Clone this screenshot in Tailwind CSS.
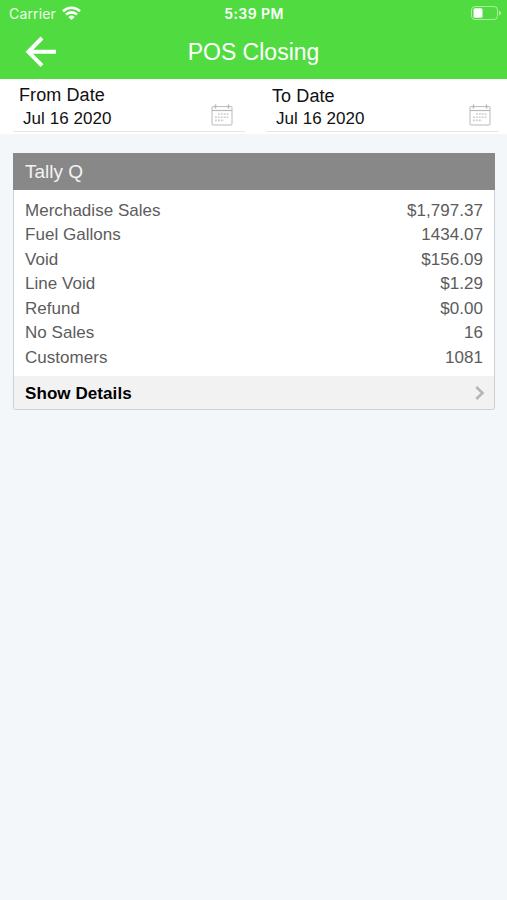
<!DOCTYPE html>
<html lang="en">
<head>
<meta charset="utf-8">
<title>POS Closing</title>
<script src="https://cdn.jsdelivr.net/npm/@tailwindcss/browser@4"></script>
</head>
<body class="w-[507px] h-[900px] overflow-hidden bg-[#f3f7fa] font-['Liberation_Sans',Arial,sans-serif] text-[17px]">
<header class="h-[79px] bg-[#50dc40] text-white flex flex-col">
  <div class="h-7 grid grid-cols-3 items-center pl-[9px] pr-[6px] font-[Inter,sans-serif] leading-none">
    <div class="flex items-center gap-[6px]">
      <span class="text-[14px] tracking-[0.15px] text-white/90">Carrier</span>
      <svg class="w-[19px] h-[14px] -mt-[2px]" viewBox="0 0 19 14" fill="none" stroke="white" stroke-width="2.6"><path d="M1 5.2a12.2 12.2 0 0 1 17 0M4 8.6a7.8 7.8 0 0 1 11 0"/><path d="M6.4 11a4.5 4.5 0 0 1 6.2 0L9.5 14z" fill="white" stroke="none"/></svg>
    </div>
    <span class="text-center text-[14px] font-semibold tracking-[0.4px] -ml-[2px]">5:39 PM</span>
    <svg class="justify-self-end w-[31px] h-[14px] -mt-[2px] -mr-[1px]" viewBox="0 0 31 14" fill="none"><rect x=".5" y=".5" width="26" height="13" rx="3.5" stroke="white" stroke-opacity=".5"/><rect x="2.5" y="2.3" width="9" height="9.4" rx="1.5" fill="white"/><path d="M28 4.5v5q2-1 2-2.5t-2-2.5z" fill="white" fill-opacity=".55"/></svg>
  </div>
  <div class="h-[51px] grid grid-cols-[60px_1fr_60px] items-center">
    <svg class="w-[32px] h-[32px] ml-[25px] -mt-[3px]" viewBox="0 0 32 32" fill="none" stroke="white" stroke-width="4"><path d="M17 2L3.4 15.8 17 29.6M3.2 15.8h27.8"/></svg>
    <h1 class="text-center text-[23px] leading-none -mt-[3px]">POS Closing</h1>
  </div>
</header>
<section class="h-[55px] bg-white flex justify-between pl-[13px] pr-[9px] text-[#111]">
  <div class="w-[232px] h-[53px] border-b border-[#e4e8ea] pl-[6px] pr-[12px] pt-[6px]">
    <div class="text-[18px] leading-[20px] tracking-[0.1px]">From Date</div>
    <div class="flex justify-between pl-[4px] pt-[3px]">
      <span class="leading-[22px] tracking-[0.05px]">Jul 16 2020</span>
      <svg class="w-[22px] h-[22px] -mt-[4px]" viewBox="0 0 22 22" fill="none" stroke="#b9b9b9"><rect x="1" y="2.6" width="20" height="18.4" rx="1"/><path d="M1 6.5h20" stroke-width="1.2"/><path d="M4.5.5v4M17.5.5v4" stroke-width="1.5"/><path d="M7 10h11M4 13.2h14M4 16.4h9" stroke-width="1.6" stroke-dasharray="1.8 1.1" stroke="#cccccc"/></svg>
    </div>
  </div>
  <div class="w-[232px] h-[53px] border-b border-[#e4e8ea] pl-[6px] pr-[7px] pt-[7px]">
    <div class="text-[18px] leading-[20px] tracking-[0.1px]">To Date</div>
    <div class="flex justify-between pl-[4px] pt-[2px]">
      <span class="leading-[22px] tracking-[0.05px]">Jul 16 2020</span>
      <svg class="w-[22px] h-[22px] -mt-[4px]" viewBox="0 0 22 22" fill="none" stroke="#b9b9b9"><rect x="1" y="2.6" width="20" height="18.4" rx="1"/><path d="M1 6.5h20" stroke-width="1.2"/><path d="M4.5.5v4M17.5.5v4" stroke-width="1.5"/><path d="M7 10h11M4 13.2h14M4 16.4h9" stroke-width="1.6" stroke-dasharray="1.8 1.1" stroke="#cccccc"/></svg>
    </div>
  </div>
</section>
<main class="mt-[19px] ml-[13px] w-[482px] h-[257px] flex flex-col">
  <h2 class="h-[37px] shrink-0 bg-[#888888] text-[#f3f3f3] text-[19px] leading-[38px] pl-[12px]">Tally Q</h2>
  <div class="flex-1 flex flex-col bg-white border border-t-0 border-[#cdd1d4] rounded-b-[3px] overflow-hidden">
    <dl class="pt-[9px] px-[11px] h-[186px] text-[#5c5c5c] leading-[24.45px] tracking-[0.03px]">
      <div class="flex justify-between"><dt>Merchadise Sales</dt><dd>$1,797.37</dd></div>
      <div class="flex justify-between"><dt>Fuel Gallons</dt><dd>1434.07</dd></div>
      <div class="flex justify-between"><dt>Void</dt><dd>$156.09</dd></div>
      <div class="flex justify-between"><dt>Line Void</dt><dd>$1.29</dd></div>
      <div class="flex justify-between"><dt>Refund</dt><dd>$0.00</dd></div>
      <div class="flex justify-between"><dt>No Sales</dt><dd>16</dd></div>
      <div class="flex justify-between"><dt>Customers</dt><dd>1081</dd></div>
    </dl>
    <div class="flex-1 bg-[#f2f2f2] flex items-center justify-between pl-[11px] pr-[9px] font-bold text-black">
      <span class="leading-none pt-[2px] tracking-[0.08px]">Show Details</span>
      <svg class="w-[10px] h-[14px]" viewBox="0 0 10 14" fill="none" stroke="#b5b5b5" stroke-width="2.6"><path d="M1.3 1l6.2 6-6.2 6"/></svg>
    </div>
  </div>
</main>
</body>
</html>
